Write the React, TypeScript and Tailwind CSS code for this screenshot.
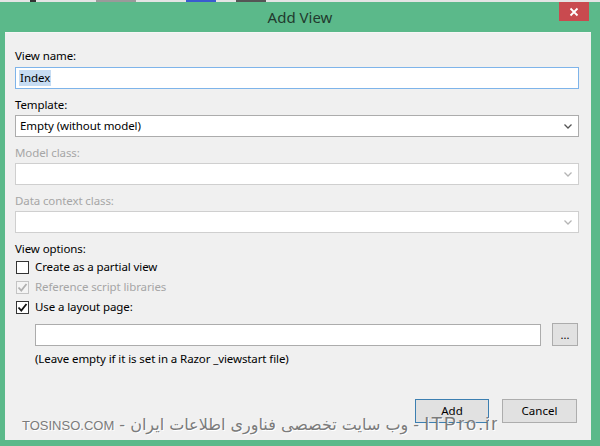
import React from 'react';

const font = { fontFamily: '"Noto Sans", "Open Sans", sans-serif' };

function Chevron({ disabled }: { disabled?: boolean }) {
  return (
    <svg width="8" height="5" viewBox="0 0 8 5" className="mr-[6px]">
      <path
        d="M0.5 0.5 L4 4 L7.5 0.5"
        fill="none"
        stroke={disabled ? '#b5b5b5' : '#555'}
        strokeWidth="1.3"
      />
    </svg>
  );
}

function Select({ value, disabled }: { value?: string; disabled?: boolean }) {
  return (
    <div
      className={
        'mt-[2px] flex h-[22px] items-center justify-between border bg-white pl-[4px] text-[11.5px] tracking-[-0.1px] text-black ' +
        (disabled ? 'border-[#cfcfcf] bg-[#fcfcfc]' : 'border-[#acacac]')
      }
    >
      <span>{value ?? ''}</span>
      <Chevron disabled={disabled} />
    </div>
  );
}

function Label({ text, disabled, className = '' }: { text: string; disabled?: boolean; className?: string }) {
  return (
    <div
      className={
        'h-[16px] text-[11.5px] leading-[16px] tracking-[-0.1px] ' +
        (disabled ? 'text-[#a6a6a6] ' : 'text-black ') +
        className
      }
    >
      {text}
    </div>
  );
}

function Check({ checked, disabled, label }: { checked?: boolean; disabled?: boolean; label: string }) {
  return (
    <div className="flex h-[20px] items-center gap-[6px] pl-[1px]">
      <div
        className={
          'flex h-[13px] w-[13px] items-center justify-center border ' +
          (disabled ? 'border-[#c4c4c4] bg-[#f4f4f4]' : 'border-[#333] bg-white')
        }
      >
        {checked ? (
          <svg width="11" height="11" viewBox="0 0 11 11">
            <path
              d="M1.5 5.5 L4.3 8.5 L9.5 2"
              fill="none"
              stroke={disabled ? '#b0b0b0' : '#111'}
              strokeWidth="1.8"
            />
          </svg>
        ) : null}
      </div>
      <span className={'text-[11.5px] tracking-[-0.1px] ' + (disabled ? 'text-[#a6a6a6]' : 'text-black')}>
        {label}
      </span>
    </div>
  );
}

export default function App() {
  return (
    <div className="flex h-[446px] w-[600px] flex-col overflow-hidden bg-[#5bb98a]" style={font}>
      <div className="flex h-[2px] bg-[#e4e4e4]">
        <div className="ml-[30px] w-[6px] bg-[#333]" />
        <div className="ml-[60px] w-[40px] bg-[#9a9a9a]" />
        <div className="ml-[50px] w-[30px] bg-[#3a5bd0]" />
        <div className="ml-[20px] w-[30px] bg-[#555]" />
      </div>
      <div className="relative flex h-[30px] items-center justify-center">
        <span className="text-[15px] text-[#223a2e]">Add View</span>
        <div className="absolute right-[11px] top-0 flex h-[19px] w-[30px] items-center justify-center bg-[#c94a4f]">
          <svg width="10" height="10" viewBox="0 0 10 10">
            <path d="M1.5 1.5 L8.5 8.5 M8.5 1.5 L1.5 8.5" stroke="#fff" strokeWidth="1.8" />
          </svg>
        </div>
      </div>
      <div className="relative mb-[6px] ml-[5px] mr-[9px] flex flex-1 flex-col border-t border-[#f6f6f6] bg-[#f0f0f0] pl-[10px] pr-[12px] pt-[15px]">
        <Label text="View name:" />
        <div className="mt-[3px] flex h-[22px] items-center border border-[#7eb4ea] bg-white pl-[3px]">
          <span className="bg-[#c6dcf3] px-[1px] text-[11.5px] leading-[16px] text-black">Index</span>
        </div>

        <Label text="Template:" className="mt-[8px]" />
        <Select value="Empty (without model)" />

        <Label text="Model class:" disabled className="mt-[8px]" />
        <Select disabled />

        <Label text="Data context class:" disabled className="mt-[8px]" />
        <Select disabled />

        <Label text="View options:" className="mt-[8px]" />
        <Check label="Create as a partial view" />
        <Check label="Reference script libraries" checked disabled />
        <Check label="Use a layout page:" checked />

        <div className="ml-[20px] mt-[6px] flex items-center">
          <div className="h-[22px] w-[506px] border border-[#acacac] bg-white" />
          <div className="ml-[11px] flex h-[23px] w-[26px] items-center justify-center border border-[#acacac] bg-[#e1e1e1] text-[11px] leading-none text-black">
            ...
          </div>
        </div>
        <div className="ml-[20px] mt-[5px] text-[11.5px] leading-[16px] tracking-[-0.1px] text-black">
          (Leave empty if it is set in a Razor _viewstart file)
        </div>

        <div className="mr-[2px] mt-auto mb-[17px] flex justify-end gap-[13px]">
          <div className="flex h-[24px] w-[74px] items-center justify-center border border-[#3c7fb1] bg-[#e1e1e1] text-[11.5px] text-black">
            Add
          </div>
          <div className="flex h-[24px] w-[75px] items-center justify-center border border-[#adadad] bg-[#e1e1e1] text-[11.5px] text-black">
            Cancel
          </div>
        </div>

        <div
          className="absolute left-[17px] top-[378px] whitespace-nowrap text-[#7b7b7b]"
          style={{ textShadow: '1px 1px 0 #ffffff', fontFamily: '"DejaVu Sans", "Liberation Sans", sans-serif' }}
        >
          <span className="text-[13px]" style={{ fontFamily: '"Liberation Sans", sans-serif' }}>
            TOSINSO.COM
          </span>
          <span className="text-[16px]">{' - وب سایت تخصصی فناوری اطلاعات ایران - '}</span>
          <span className="text-[18px] tracking-[2px]" style={{ fontFamily: '"Liberation Sans", sans-serif' }}>
            ITPro.ir
          </span>
        </div>
      </div>
    </div>
  );
}
